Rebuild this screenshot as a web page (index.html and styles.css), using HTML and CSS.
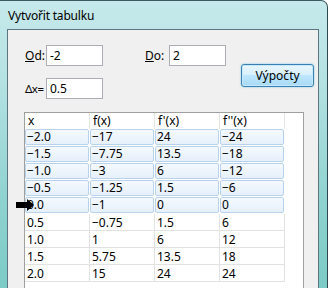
FILE: index.html
```html
<!DOCTYPE html>
<html>
<head>
<meta charset="utf-8">
<link rel="stylesheet" href="styles.css">
</head>
<body>
<div class="window">
  <div class="titlebar">Vytvořit tabulku</div>
  <div class="client">
    <div class="top">
      <div class="fields">
        <div class="row">
          <label class="lbl lbl-od"><u>O</u>d:</label>
          <div class="input">-2</div>
          <label class="lbl lbl-do"><u>D</u>o:</label>
          <div class="input">2</div>
        </div>
        <div class="row row2">
          <label class="lbl lbl-od">Δx=</label>
          <div class="input">0.5</div>
        </div>
      </div>
      <div class="btn">Výpočty</div>
    </div>
    <div class="grid">
      <div class="head">
        <div class="hc">x</div><div class="hc">f(x)</div><div class="hc">f'(x)</div><div class="hc">f''(x)</div>
      </div>
      <div class="tr sel"><div class="td">−2.0</div><div class="td">−17</div><div class="td">24</div><div class="td">−24</div></div>
      <div class="tr sel"><div class="td">−1.5</div><div class="td">−7.75</div><div class="td">13.5</div><div class="td">−18</div></div>
      <div class="tr sel"><div class="td">−1.0</div><div class="td">−3</div><div class="td">6</div><div class="td">−12</div></div>
      <div class="tr sel"><div class="td">−0.5</div><div class="td">−1.25</div><div class="td">1.5</div><div class="td">−6</div></div>
      <div class="tr sel"><div class="td">0.0</div><div class="td">−1</div><div class="td">0</div><div class="td">0</div></div>
      <div class="tr"><div class="td">0.5</div><div class="td">−0.75</div><div class="td">1.5</div><div class="td">6</div></div>
      <div class="tr"><div class="td">1.0</div><div class="td">1</div><div class="td">6</div><div class="td">12</div></div>
      <div class="tr"><div class="td">1.5</div><div class="td">5.75</div><div class="td">13.5</div><div class="td">18</div></div>
      <div class="tr"><div class="td">2.0</div><div class="td">15</div><div class="td">24</div><div class="td">24</div></div>
    </div>
  </div>
  <svg class="arrow" width="18" height="12" viewBox="0 0 18 12"><path d="M0 3 H11 V0 L18 6 L11 12 V9 H0 Z" fill="#000"/></svg>
</div>
</body>
</html>
```
FILE: styles.css
```css
* { box-sizing: border-box; }
html, body { margin: 0; padding: 0; }
body { width: 328px; height: 288px; overflow: hidden; background: #fff; font-family: "Noto Sans", "Open Sans", sans-serif; font-size: 12px; color: #000; }
.window {
  position: relative;
  width: 328px; height: 288px;
  background: linear-gradient(180deg, #c6e9eb 0%, #b3e1e2 30%, #8ed2cf 70%, #7ccbc6 100%);
  border-top: 1px solid #3d5a63;
  border-right: 1px solid #2f4850;
  border-top-right-radius: 7px;
  padding: 0 8px 0 7px;
  overflow: hidden;
}
.titlebar {
  height: 28px;
  line-height: 29px;
  padding-left: 1px;
  font-size: 12px;
  color: #000;
  letter-spacing: -0.2px;
}
.client {
  height: 260px;
  background: #f0f0f0;
  border: 1px solid #5d7580;
  border-bottom: none;
  padding: 15px 0 0 16px;
  overflow: hidden;
}
.top { display: flex; }
.fields { display: flex; flex-direction: column; }
.row { display: flex; align-items: center; height: 21px; }
.row2 { margin-top: 12px; }
.lbl { display: block; line-height: 21px; }
.lbl-od { width: 22px; padding-left: 1px; }
.lbl-do { width: 24px; margin-left: 42px; padding-left: 0; }
.row2 .lbl-od { letter-spacing: -0.5px; font-size: 11.5px; }
.input {
  width: 57px; height: 21px;
  background: #fff;
  border: 1px solid #abadb3;
  border-top-color: #abadb3;
  padding: 0 3px;
  line-height: 19px;
}
.btn {
  margin-left: 15px;
  margin-top: 19px;
  width: 73px; height: 23px;
  border: 1px solid #3c7fb1;
  border-radius: 3px;
  background: linear-gradient(180deg, #eaf6fd 0%, #d9f0fc 45%, #bee6fd 50%, #a7d9f5 100%);
  box-shadow: inset 0 0 0 1px #c6eafc, 0 0 2px #6fc5ee;
  text-align: center;
  line-height: 21px;
}
.grid {
  margin-top: 13px;
  width: 280px;
  height: 200px;
  background: #fff;
  border: 1px solid #a0a0a0;
  border-bottom: none;
}
.head { display: flex; height: 16px; }
.hc {
  width: 65px; height: 16px;
  line-height: 16px;
  padding-left: 3px;
  border-right: 1px solid #e5e5e5;
}
.head .hc:first-child { width: 65px; }
.tr { display: flex; height: 17px; }
.td {
  width: 65px; height: 17px;
  line-height: 17px;
  padding-left: 2px;
  border-right: 1px solid #e2e2e2;
  border-bottom: 1px solid #e2e2e2;
}
.tr .td:first-child, .head .hc:first-child { width: 65px; }
.tr.sel .td {
  border: 1px solid #b9d3ec;
  border-radius: 2px;
  background: linear-gradient(180deg, #f4f9fe 0%, #e6f0fb 100%);
  margin: 0 1px 1px 0;
  height: 16px;
  width: 64px;
  line-height: 14px;
  padding-left: 1px;
}
.tr.sel { height: 17px; padding-left: 0; }
.arrow { position: absolute; left: 16px; top: 198px; }
```
